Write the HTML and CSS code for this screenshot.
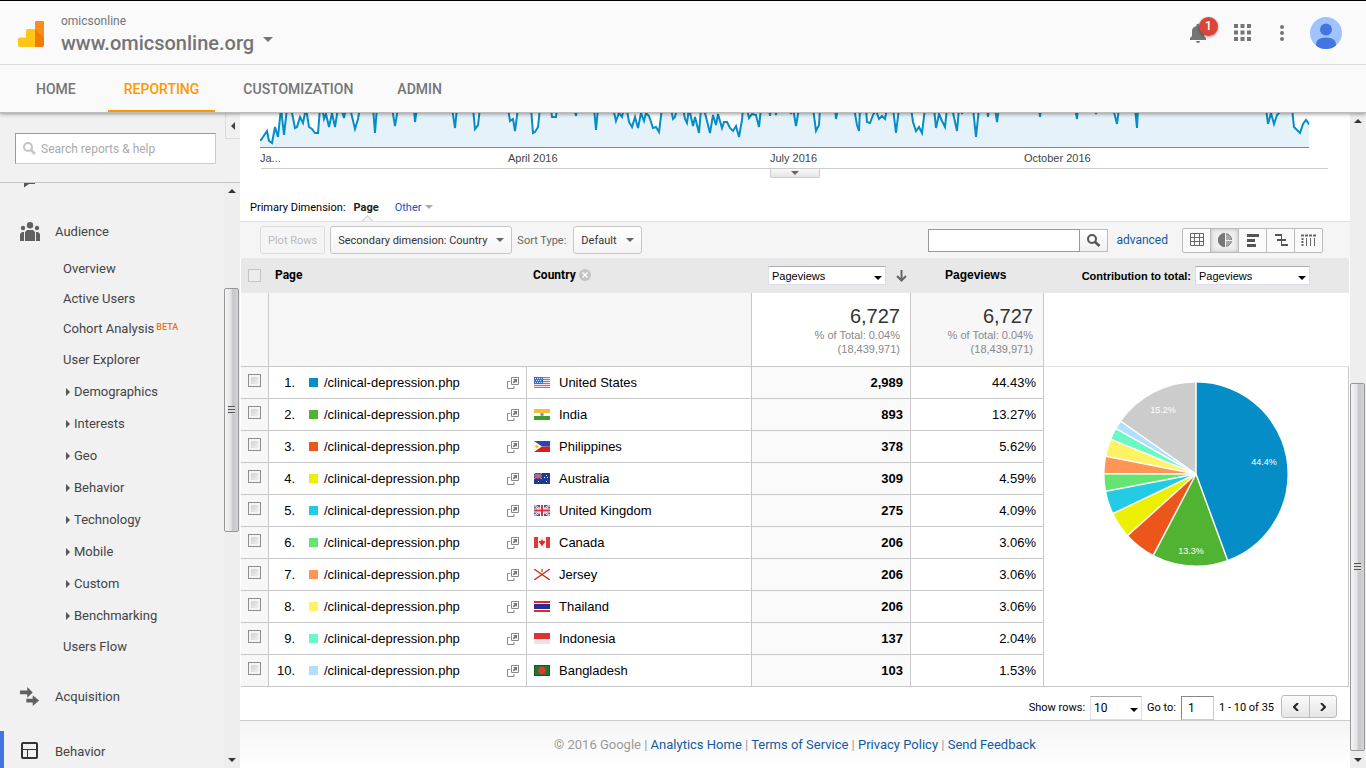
FILE: index.html
```html
<!DOCTYPE html>
<html lang="en">
<head>
    <meta charset="UTF-8">
    <meta name="viewport" content="width=device-width, initial-scale=1.0">
    <title>Pages - Analytics</title>
    <link rel="stylesheet" href="styles.css">
</head>
<body>
    <!-- shared icons -->
    <svg width="0" height="0" class="defs">
        <symbol id="open" viewBox="0 0 12 12">
            <path d="M4.500.5h7v7h-7zM3 4.500H.5v7h6.500V9" fill="none" stroke="#888"/>
            <path d="M6 2h4v4L8.800 4.800 6.800 6.500 5.700 5.300 7.400 3.400z" fill="#777"/>
        </symbol>
        <symbol id="us" viewBox="0 0 16 11">
            <path fill="#f6e3e3" d="M0 0h16v11H0z"/>
            <path stroke="#dc5f5f" d="M0 .5h16M0 2.500h16M0 4.500h16M0 6.500h16M0 8.500h16M0 10.500h16"/>
            <path fill="#3d6fc9" d="M0 0h9v7H0z"/>
            <path stroke="#dbe6fa" stroke-dasharray="1 1" d="M1 1.500h7M2 3.500h6M1 5.500h7"/>
        </symbol>
        <symbol id="in" viewBox="0 0 16 11">
            <path fill="#f4bd3c" d="M0 0h16v4H0z"/><path fill="#fff" d="M0 4h16v3H0z"/><path fill="#3d9a2c" d="M0 7h16v4H0z"/>
            <circle cx="8" cy="5.500" r="1.800" fill="#8797b8"/>
        </symbol>
        <symbol id="ph" viewBox="0 0 16 11">
            <path fill="#2746b9" d="M0 0h16v5.500H0z"/><path fill="#d91c1c" d="M0 5.500h16V11H0z"/>
            <path fill="#fbf6df" d="M0 0l8 5.500L0 11z"/><circle cx="2.800" cy="5.500" r="1.500" fill="#efc62d"/>
        </symbol>
        <symbol id="au" viewBox="0 0 16 11">
            <path fill="#1f3c8c" d="M0 0h16v11H0z"/><path stroke="#c9b3cd" d="M0 0l8 6M8 0L0 6"/>
            <path stroke="#e05b64" stroke-width="1.500" d="M4 0v6M0 3h8"/>
            <path stroke="#fff" stroke-dasharray="1 2" d="M4 8.500h3M10 4.500h5M12 2.500h1M12 8.500h2"/>
        </symbol>
        <symbol id="gb" viewBox="0 0 16 11">
            <path fill="#3c57a6" d="M0 0h16v11H0z"/><path stroke="#fff" stroke-width="2" d="M0 0l16 11M16 0L0 11"/>
            <path stroke="#d6414b" stroke-width=".8" d="M0 0l16 11M16 0L0 11"/>
            <path stroke="#fff" stroke-width="4" d="M8 0v11M0 5.500h16"/><path stroke="#d8303a" stroke-width="2" d="M8 0v11M0 5.500h16"/>
        </symbol>
        <symbol id="ca" viewBox="0 0 16 11">
            <path fill="#f5f0f0" d="M0 0h16v11H0z"/><path fill="#dd3a3a" d="M0 0h4v11H0zM12 0h4v11h-4z"/>
            <path fill="#d92b2b" d="M8 2l1 2 2 0-.5 2L9 7.500 8.300 9h-.6L7 7.500 5.500 6 5 4h2z"/>
        </symbol>
        <symbol id="je" viewBox="0 0 16 11">
            <path fill="#fff" d="M0 0h16v11H0z"/><path stroke="#d5281c" stroke-width="1.400" d="M0 0l16 11M16 0L0 11"/>
            <path fill="#d9a21b" d="M7 0h2v3H7z"/>
        </symbol>
        <symbol id="th" viewBox="0 0 16 11">
            <path fill="#e0252b" d="M0 0h16v11H0z"/><path fill="#fff" d="M0 2h16v7H0z"/><path fill="#2a2d93" d="M0 3h16v5H0z"/>
        </symbol>
        <symbol id="id" viewBox="0 0 16 11">
            <path fill="#dc3431" d="M0 0h16v6H0z"/><path fill="#e6e6e6" d="M0 6h16v5H0z"/>
        </symbol>
        <symbol id="bd" viewBox="0 0 16 11">
            <path fill="#155a1c" d="M0 0h16v11H0z"/><path fill="#24752a" d="M1 1h14v9H1z"/><circle cx="8" cy="5.500" r="3.700" fill="#e03a35"/>
        </symbol>
    </svg>

    <header>
        <div class="topbar">
            <svg class="logo" width="26" height="26" viewBox="0 0 26 26">
                <path fill="#ffc517" d="M0 18.500q0-2 2-2h6V10q0-2 2-2h7v18H2q-2 0-2-2z"/>
                <path fill="#f57c00" d="M17 2q0-2 2-2h5q2 0 2 2v22q0 2-2 2h-7z"/>
                <path fill="#fb8c1e" d="M17 2q0-2 2-2h5q2 0 2 2v15L17 8z"/>
            </svg>
            <div class="account">
                <span class="owner">omicsonline</span>
                <button class="property">www.omicsonline.org<i class="tri"></i></button>
            </div>
            <div class="tools">
                <button class="bell" aria-label="Notifications">
                    <svg width="18" height="20" viewBox="0 0 18 20" fill="#757575"><path d="M1 17v-2l2-2V8q0-4 4.500-5V1.500q1.500-1.500 3 0V3Q15 4 15 8v5l2 2v2zM7 18h4q0 2-2 2t-2-2z"/></svg>
                    <span class="badge">1</span>
                </button>
                <button class="apps" aria-label="Apps">
                    <svg width="17" height="17" viewBox="0 0 17 17" fill="#757575"><path d="M0 0h4v4H0zM6.500 0h4v4h-4zM13 0h4v4h-4zM0 6.500h4v4H0zM6.500 6.500h4v4h-4zM13 6.500h4v4h-4zM0 13h4v4H0zM6.500 13h4v4h-4zM13 13h4v4h-4z"/></svg>
                </button>
                <button class="more" aria-label="More">
                    <svg width="4" height="18" viewBox="0 0 4 18" fill="#757575"><circle cx="2" cy="3" r="2"/><circle cx="2" cy="9" r="2"/><circle cx="2" cy="15" r="2"/></svg>
                </button>
                <button class="avatar" aria-label="Account">
                    <svg width="32" height="32" viewBox="0 0 32 32"><circle cx="16" cy="16" r="16" fill="#a0c3ff"/><circle cx="16" cy="12.500" r="6" fill="#4374e0"/><path fill="#4374e0" d="M6 28.500Q5.500 20.500 16 20.500T26 28.500Q22 32 16 32T6 28.500z"/></svg>
                </button>
            </div>
        </div>
        <nav class="tabs">
            <a href="#">HOME</a>
            <a href="#" class="active">REPORTING</a>
            <a href="#">CUSTOMIZATION</a>
            <a href="#">ADMIN</a>
        </nav>
    </header>

    <div class="layout">
        <aside>
            <div class="search-area">
                <label class="search">
                    <svg width="13" height="13" viewBox="0 0 13 13" fill="none" stroke="#c4c4c4"><circle cx="5" cy="5" r="4" stroke-width="2"/><path d="M8 8l4 4" stroke-width="2.500"/></svg>
                    <input type="text" placeholder="Search reports &amp; help" aria-label="Search reports">
                </label>
                <button class="collapse" aria-label="Collapse"><svg width="4" height="8" viewBox="0 0 4 8"><path d="M4 0v8L0 4z" fill="#444"/></svg></button>
            </div>
            <div class="side-scroll">
                <nav class="menu">
                    <div class="clipped"><svg width="12" height="5" viewBox="0 0 12 5"><path d="M0 0h11v1H5L0 4.500z" fill="#555"/></svg></div>
                    <a href="#" class="section">
                        <svg width="20" height="19" viewBox="0 0 20 19" fill="#606060"><circle cx="10" cy="3.200" r="3.200"/><circle cx="3" cy="6" r="2.200"/><circle cx="17" cy="6" r="2.200"/><path d="M5 19v-9l2-2h6l2 2v9zM0 19v-7l2-2h2v9zM16 19v-9h2l2 2v7z"/></svg>
                        Audience
                    </a>
                    <ul>
                        <li><a href="#">Overview</a></li>
                        <li><a href="#">Active Users</a></li>
                        <li><a href="#">Cohort Analysis<span class="beta">BETA</span></a></li>
                        <li class="tall"><a href="#">User Explorer</a></li>
                        <li class="tall"><a href="#" class="group">Demographics</a></li>
                        <li class="tall"><a href="#" class="group">Interests</a></li>
                        <li class="tall"><a href="#" class="group">Geo</a></li>
                        <li class="tall"><a href="#" class="group">Behavior</a></li>
                        <li class="tall"><a href="#" class="group">Technology</a></li>
                        <li class="tall"><a href="#" class="group">Mobile</a></li>
                        <li class="tall"><a href="#" class="group">Custom</a></li>
                        <li class="tall"><a href="#" class="group">Benchmarking</a></li>
                        <li><a href="#">Users Flow</a></li>
                    </ul>
                    <a href="#" class="section">
                        <svg width="22" height="21" viewBox="0 0 22 21" fill="#606060"><path d="M0 4h8V0l6 6-6 6V8H0zM7 13h7V9l7 6-7 6v-4H7z"/></svg>
                        Acquisition
                    </a>
                    <a href="#" class="section current">
                        <svg width="20" height="18" viewBox="0 0 20 18" fill="none" stroke="#333"><rect x="2" y="1" width="15" height="15" rx="1" stroke-width="2"/><path d="M2 7.500h15M7.500 8v8"/></svg>
                        Behavior
                    </a>
                </nav>
                <div class="scrollbar">
                    <i class="up"></i><div class="gap-a"></div><div class="thumb"></div><div class="gap-b"></div><i class="down"></i>
                </div>
            </div>
        </aside>

        <main>
            <div class="chart">
                <svg width="100%" height="35" viewBox="0 0 1049 35" preserveAspectRatio="none">
                    <path class="area" d="M1 27L7 18 9 28 12 30 15 14 18 24 21-5 24 22 27-5 31-5 35 15 37 14 40 4 43 10 46-5 49 14 52 16 55 20 58 20 60-5 62-8 64 6 66 1 69 14 72 0 75 14 78-5 81-5 84 5 86-5 90-5 95 16 98 6 100-6 113-6 115 20 117-6 132-5 135 13 138-5 154-5 155 9 157-5 192-5 195 15 197-5 213-5 215 16 218 12 220-5 248-5 250 8 253 6 255 18 258-5 271-5 273 20 275 19 278 14 280-5 291-5 292 4 296 4 297-5 314-5 316 3 317-5 334-5 336 17 338-5 353-5 356 8 359 0 362 4 364-5 367-3 369 9 372 14 375 4 378 15 381 0 384 8 386 0 389 3 393 15 396 14 399 19 402-5 411-5 413 6 415 4 417-5 423-5 425 6 427 10 429-5 433 13 435 4 439 20 441-5 445 0 450 20 453 2 456 12 458 1 462 15 464 9 467 9 470 15 473 18 476 13 479 24 482 7 483-5 487-5 489 5 492 1 496 2 499 14 501-5 509-5 510 3 511-5 515-5 516 2 517-5 530-5 531 1 533-5 536 13 539-5 553-5 556 18 559 12 560-5 575-5 576 6 578-5 594-5 597 12 599 18 600-5 606-5 607 9 610 10 613 2 616-3 619 6 622 3 625 6 627-5 633-5 636 20 639-5 651-5 653 9 656 18 659 14 662 20 665-5 674-5 676 15 679 1 682 8 685 14 687-5 692-5 697 18 699-5 701-5 702 1 703-5 713-5 716 24 719-5 727-5 728 4 729-5 735-5 737 9 739-5 779-5 780 4 781-5 815-5 817 6 818-5 835-5 836 1 837-5 853-5 857 11 859-5 875-5 877 15 878-5 1006-5 1008 11 1011 0 1014 11 1017 2 1020-1 1032-5 1034 14 1040 20 1043 11 1046 7 1049 11H1060V60H-5V27z"/>
                    <path class="axis-line" d="M0 34.500h1049"/>
                </svg>
                <div class="months"><span>Ja...</span><span>April 2016</span><span>July 2016</span><span>October 2016</span></div>
            </div>
            <div class="divider"><button class="drawer" aria-label="Expand chart"><i class="tri"></i></button></div>

            <div class="dimension">
                <span>Primary Dimension:</span><b class="selected">Page</b><a href="#">Other<i class="tri"></i></a>
            </div>

            <div class="toolbar">
                <button class="btn" disabled>Plot Rows</button>
                <button class="btn">Secondary dimension: Country<i class="tri"></i></button>
                <span class="sort">Sort Type:</span>
                <button class="btn">Default<i class="tri"></i></button>
                <div class="find">
                    <input type="text" aria-label="Filter rows">
                    <button aria-label="Search"><svg width="14" height="13" viewBox="0 0 14 13" fill="none" stroke="#555"><circle cx="5" cy="5" r="4" stroke-width="2"/><path d="M8 8l4.500 4" stroke-width="2.600"/></svg></button>
                </div>
                <a href="#" class="advanced">advanced</a>
                <div class="views">
                    <button aria-label="Data"><svg width="14" height="14" viewBox="0 0 14 14" fill="none" stroke="#666"><path d="M.5.5h13v12H.5zM.5 4.500h13M.5 8.500h13M4.500.5v12M9.500.5v12"/></svg></button>
                    <button class="on" aria-label="Percentage"><svg width="14" height="14" viewBox="0 0 14 14"><circle cx="7" cy="7" r="6.500" fill="#aaa" stroke="#777"/><path fill="#777" d="M7 0v14A7 7 0 0 1 7 0z"/><path stroke="#f4f4f4" d="M7.500 0v14M8 7.500h6"/></svg></button>
                    <button aria-label="Performance"><svg width="14" height="14" viewBox="0 0 14 14" fill="#555"><path d="M1 1h12v3H1zM1 6h8v3H1zM1 11h9v3H1z"/></svg></button>
                    <button aria-label="Comparison"><svg width="14" height="14" viewBox="0 0 14 14" fill="none" stroke="#555"><path d="M7.500 1v12"/><path stroke-width="2" d="M1 2h7M7 7h5M3 7h4M7 12h7"/></svg></button>
                    <button aria-label="Pivot"><svg width="16" height="13" viewBox="0 0 16 13" fill="none" stroke="#666"><path stroke-width="2" stroke-dasharray="3 1" d="M0 1.500h16"/><path stroke-width="2" stroke-dasharray="2 1" d="M1.500 4v9"/><path d="M5.500 4v8M9.500 4v8M13.500 4v8"/></svg></button>
                </div>
            </div>

            <table>
                <colgroup><col class="c-check"><col class="c-page"><col class="c-country"><col class="c-views"><col class="c-share"><col></colgroup>
                <thead>
                    <tr>
                        <th><input type="checkbox" class="all" disabled aria-label="Select all rows"></th>
                        <th class="name">Page</th>
                        <th class="name">Country <svg width="12" height="12" viewBox="0 0 12 12"><circle cx="6" cy="6" r="6" fill="#c4c4c4"/><path stroke="#fff" stroke-width="1.300" d="M3.500 3.500l5 5M8.500 3.500l-5 5"/></svg></th>
                        <th class="metric">
                            <span class="select"><select aria-label="Metric"><option>Pageviews</option></select></span>
                            <svg width="11" height="12" viewBox="0 0 11 12" fill="none" stroke="#666" stroke-width="2"><path d="M5.500 0v10M1 6l4.500 4.500L10 6"/></svg>
                        </th>
                        <th class="share">Pageviews</th>
                        <th class="contribution"><div><label for="contrib">Contribution to total:</label><span class="select"><select id="contrib"><option>Pageviews</option></select></span></div></th>
                    </tr>
                </thead>
                <tbody>
                    <tr class="total">
                        <td></td>
                        <td colspan="2"></td>
                        <td><strong>6,727</strong>% of Total: 0.04%<br>(18,439,971)</td>
                        <td><strong>6,727</strong>% of Total: 0.04%<br>(18,439,971)</td>
                        <td></td>
                    </tr>
                    <tr>
                        <td><input type="checkbox" aria-label="Row 1"></td>
                        <td><div class="page"><span class="num">1.</span><i class="swatch s1"></i>/clinical-depression.php<svg class="open"><use href="#open"/></svg></div></td>
                        <td><div class="country"><svg><use href="#us"/></svg>United States</div></td>
                        <td>2,989</td><td>44.43%</td>
                        <td rowspan="10" class="pie">
                            <svg width="184" height="184" viewBox="-92 -92 184 184">
                                <g class="slices" transform="rotate(-90)">
                                    <circle r="46" pathLength="100" class="s1" stroke-dasharray="44.430 100"/>
                                    <circle r="46" pathLength="100" class="s2" stroke-dasharray="13.270 100" stroke-dashoffset="-44.430"/>
                                    <circle r="46" pathLength="100" class="s3" stroke-dasharray="5.620 100" stroke-dashoffset="-57.700"/>
                                    <circle r="46" pathLength="100" class="s4" stroke-dasharray="4.590 100" stroke-dashoffset="-63.320"/>
                                    <circle r="46" pathLength="100" class="s5" stroke-dasharray="4.090 100" stroke-dashoffset="-67.910"/>
                                    <circle r="46" pathLength="100" class="s6" stroke-dasharray="3.060 100" stroke-dashoffset="-72"/>
                                    <circle r="46" pathLength="100" class="s7" stroke-dasharray="3.060 100" stroke-dashoffset="-75.060"/>
                                    <circle r="46" pathLength="100" class="s8" stroke-dasharray="3.060 100" stroke-dashoffset="-78.120"/>
                                    <circle r="46" pathLength="100" class="s9" stroke-dasharray="2.040 100" stroke-dashoffset="-81.180"/>
                                    <circle r="46" pathLength="100" class="s10" stroke-dasharray="1.530 100" stroke-dashoffset="-83.220"/>
                                    <circle r="46" pathLength="100" class="s11" stroke-dasharray="15.250 100" stroke-dashoffset="-84.750"/>
                                </g>
                                <g class="cuts">
                                    <path d="M0 0V-93"/>
                                    <path d="M0 0V-93" transform="rotate(159.900)"/>
                                    <path d="M0 0V-93" transform="rotate(207.700)"/>
                                    <path d="M0 0V-93" transform="rotate(228)"/>
                                    <path d="M0 0V-93" transform="rotate(244.500)"/>
                                    <path d="M0 0V-93" transform="rotate(259.200)"/>
                                    <path d="M0 0V-93" transform="rotate(270.200)"/>
                                    <path d="M0 0V-93" transform="rotate(281.200)"/>
                                    <path d="M0 0V-93" transform="rotate(292.200)"/>
                                    <path d="M0 0V-93" transform="rotate(299.600)"/>
                                    <path d="M0 0V-93" transform="rotate(305.100)"/>
                                </g>
                                <text x="68" y="-9">44.4%</text>
                                <text x="-5" y="80">13.3%</text>
                                <text x="-33" y="-61">15.2%</text>
                            </svg>
                        </td>
                    </tr>
                    <tr>
                        <td><input type="checkbox" aria-label="Row 2"></td>
                        <td><div class="page"><span class="num">2.</span><i class="swatch s2"></i>/clinical-depression.php<svg class="open"><use href="#open"/></svg></div></td>
                        <td><div class="country"><svg><use href="#in"/></svg>India</div></td>
                        <td>893</td><td>13.27%</td>
                    </tr>
                    <tr>
                        <td><input type="checkbox" aria-label="Row 3"></td>
                        <td><div class="page"><span class="num">3.</span><i class="swatch s3"></i>/clinical-depression.php<svg class="open"><use href="#open"/></svg></div></td>
                        <td><div class="country"><svg><use href="#ph"/></svg>Philippines</div></td>
                        <td>378</td><td>5.62%</td>
                    </tr>
                    <tr>
                        <td><input type="checkbox" aria-label="Row 4"></td>
                        <td><div class="page"><span class="num">4.</span><i class="swatch s4"></i>/clinical-depression.php<svg class="open"><use href="#open"/></svg></div></td>
                        <td><div class="country"><svg><use href="#au"/></svg>Australia</div></td>
                        <td>309</td><td>4.59%</td>
                    </tr>
                    <tr>
                        <td><input type="checkbox" aria-label="Row 5"></td>
                        <td><div class="page"><span class="num">5.</span><i class="swatch s5"></i>/clinical-depression.php<svg class="open"><use href="#open"/></svg></div></td>
                        <td><div class="country"><svg><use href="#gb"/></svg>United Kingdom</div></td>
                        <td>275</td><td>4.09%</td>
                    </tr>
                    <tr>
                        <td><input type="checkbox" aria-label="Row 6"></td>
                        <td><div class="page"><span class="num">6.</span><i class="swatch s6"></i>/clinical-depression.php<svg class="open"><use href="#open"/></svg></div></td>
                        <td><div class="country"><svg><use href="#ca"/></svg>Canada</div></td>
                        <td>206</td><td>3.06%</td>
                    </tr>
                    <tr>
                        <td><input type="checkbox" aria-label="Row 7"></td>
                        <td><div class="page"><span class="num">7.</span><i class="swatch s7"></i>/clinical-depression.php<svg class="open"><use href="#open"/></svg></div></td>
                        <td><div class="country"><svg><use href="#je"/></svg>Jersey</div></td>
                        <td>206</td><td>3.06%</td>
                    </tr>
                    <tr>
                        <td><input type="checkbox" aria-label="Row 8"></td>
                        <td><div class="page"><span class="num">8.</span><i class="swatch s8"></i>/clinical-depression.php<svg class="open"><use href="#open"/></svg></div></td>
                        <td><div class="country"><svg><use href="#th"/></svg>Thailand</div></td>
                        <td>206</td><td>3.06%</td>
                    </tr>
                    <tr>
                        <td><input type="checkbox" aria-label="Row 9"></td>
                        <td><div class="page"><span class="num">9.</span><i class="swatch s9"></i>/clinical-depression.php<svg class="open"><use href="#open"/></svg></div></td>
                        <td><div class="country"><svg><use href="#id"/></svg>Indonesia</div></td>
                        <td>137</td><td>2.04%</td>
                    </tr>
                    <tr>
                        <td><input type="checkbox" aria-label="Row 10"></td>
                        <td><div class="page"><span class="num">10.</span><i class="swatch s10"></i>/clinical-depression.php<svg class="open"><use href="#open"/></svg></div></td>
                        <td><div class="country"><svg><use href="#bd"/></svg>Bangladesh</div></td>
                        <td>103</td><td>1.53%</td>
                    </tr>
                </tbody>
            </table>

            <div class="pager">
                <label for="rows">Show rows:</label>
                <span class="select rows"><select id="rows"><option>10</option></select></span>
                <label for="goto">Go to:</label>
                <input type="text" id="goto" value="1">
                <span class="range">1 - 10 of 35</span>
                <div class="steps">
                    <button aria-label="Previous"><svg width="6" height="8" viewBox="0 0 6 8" fill="none" stroke="#222" stroke-width="2"><path d="M5 0L1 4l4 4"/></svg></button>
                    <button aria-label="Next"><svg width="6" height="8" viewBox="0 0 6 8" fill="none" stroke="#222" stroke-width="2"><path d="M1 0l4 4-4 4"/></svg></button>
                </div>
            </div>

            <footer>&copy; 2016 Google | <a href="#">Analytics Home</a> | <a href="#">Terms of Service</a> | <a href="#">Privacy Policy</a> | <a href="#">Send Feedback</a></footer>
        </main>

        <div class="scrollbar main-bar">
            <i class="up"></i><div class="gap-a"></div><div class="thumb"></div><div class="gap-b"></div><i class="down"></i>
        </div>
    </div>
</body>
</html>
```
FILE: styles.css
```css
* {
    box-sizing: border-box;
}
body {
    margin: 0;
    height: 100vh;
    overflow: hidden;
    display: flex;
    flex-direction: column;
    font-family: Roboto, sans-serif;
    font-size: 13px;
    color: #444;
    background: #fff;
}
a {
    color: inherit;
    text-decoration: none;
}
button {
    font-family: inherit;
    padding: 0;
    border: 0;
    background: none;
    color: inherit;
}
svg {
    display: block;
    flex: none;
}
.defs {
    position: absolute;
}
.tri {
    display: inline-block;
    border: 4px solid transparent;
    border-top-color: #666;
    border-bottom: 0;
}

/* header */
header {
    position: relative;
    z-index: 1;
    flex: none;
    background: #fafafa;
    border-top: 1px solid #000;
    border-bottom: 1px solid #bbb;
    box-shadow: 0 1px 4px rgba(0, 0, 0, 0.4);
}
.topbar {
    display: flex;
    align-items: center;
    height: 64px;
    padding: 0 24px 0 18px;
    border-bottom: 1px solid #ddd;
}
.account {
    display: flex;
    flex-direction: column;
    align-items: flex-start;
    margin-left: 17px;
    padding-top: 4px;
}
.logo {
    margin-top: 2px;
}
.owner {
    font-size: 12px;
    line-height: 16px;
    color: #757575;
}
.property {
    display: flex;
    align-items: center;
    font-size: 20px;
    font-weight: 500;
    line-height: 28px;
    color: #757575;
}
.property .tri {
    border-width: 5px 5px 0;
    margin: 0 0 6px 9px;
    border-top-color: #757575;
}
.tools {
    display: flex;
    align-items: center;
    margin-left: auto;
}
.bell {
    position: relative;
    margin-right: 27px;
}
.badge {
    position: absolute;
    left: 10px;
    top: -6px;
    width: 19px;
    height: 19px;
    border-radius: 50%;
    background: #db4437;
    box-shadow: 0 1px 3px rgba(0, 0, 0, 0.4);
    color: #fff;
    font-size: 12px;
    font-weight: 500;
    line-height: 19px;
    text-align: center;
}
.apps {
    margin-right: 29px;
}
.more {
    margin-right: 26px;
}
.tabs {
    display: flex;
    gap: 12px;
    height: 47px;
    padding-left: 20px;
}
.tabs a {
    padding: 0 16px;
    border-bottom: 2px solid transparent;
    font-size: 14px;
    font-weight: 500;
    line-height: 48px;
    color: #757575;
}
.tabs .active {
    margin-left: 4px;
    color: #ff9800;
    border-color: #ff9800;
}

.layout {
    flex: 1;
    min-height: 0;
    display: flex;
}

/* sidebar */
aside {
    flex: none;
    width: 240px;
    display: flex;
    flex-direction: column;
    background: #f1f1f1;
}
.search-area {
    display: flex;
    justify-content: space-between;
    height: 70px;
    padding-left: 15px;
    border-bottom: 1px solid #c6c6c6;
}
.search {
    display: flex;
    align-items: center;
    gap: 5px;
    width: 201px;
    height: 31px;
    margin-top: 20px;
    padding-left: 7px;
    border: 1px solid #ccc;
    border-top-color: #999;
    border-left-color: #999;
    background: #fff;
}
.search input {
    flex: 1;
    min-width: 0;
    padding: 0;
    border: 0;
    outline: 0;
    font: 12px Roboto, sans-serif;
}
.search input::placeholder {
    color: #aaa;
}
.collapse {
    display: flex;
    align-items: center;
    justify-content: center;
    width: 15px;
    height: 26px;
    border: 1px solid #ddd;
    border-width: 0 0 1px 1px;
}
.side-scroll {
    flex: 1;
    min-height: 0;
    display: flex;
}
.menu {
    flex: 1;
    overflow: hidden;
}
.clipped {
    height: 28px;
    padding-left: 24px;
}
.section {
    display: flex;
    align-items: center;
    gap: 15px;
    height: 40px;
    padding-left: 20px;
}
.section svg {
    width: 20px;
    overflow: visible;
}
.section.current {
    margin-top: 15px;
    padding-left: 16px;
    border-left: 4px solid #4374e0;
}
.menu ul {
    list-style: none;
    margin: 2px 0 15px;
    padding: 0 0 0 63px;
}
.menu li {
    display: flex;
    align-items: center;
    height: 30px;
}
.menu li.tall {
    height: 32px;
}
.beta {
    margin-left: 2px;
    font-size: 9px;
    font-weight: 500;
    color: #e8711c;
    vertical-align: 3px;
}
.group::before {
    content: "";
    display: inline-block;
    margin: 0 4px 0 3px;
    border: 4px solid transparent;
    border-left-color: #555;
    border-right: 0;
}

/* scrollbars */
.scrollbar {
    flex: none;
    width: 16px;
    display: flex;
    flex-direction: column;
    align-items: center;
    padding: 6px 1px 6px 0;
    background: #eee;
}
.up,
.down {
    border: 4px solid transparent;
    border-bottom-color: #333;
    border-top: 0;
}
.down {
    border-bottom: 0;
    border-top: 4px solid #333;
}
.thumb {
    align-self: stretch;
    display: flex;
    align-items: center;
    justify-content: center;
    flex: 243;
    border: 1px solid #979797;
    border-radius: 2px;
    background: linear-gradient(to right, #f5f5f5, #e4e4e6 45%, #c6c6ca 60%, #d4d4d8);
}
.thumb::before {
    content: "";
    width: 7px;
    height: 8px;
    background: repeating-linear-gradient(#555 0 1px, #ddd 1px 3px);
}
.gap-a {
    flex: 95;
}
.gap-b {
    flex: 227;
}
.main-bar .gap-a {
    flex: 260;
}
.main-bar .thumb {
    flex: 366;
}
.main-bar .gap-b {
    flex: 7;
}

/* report */
main {
    flex: 1;
    min-width: 0;
    display: flex;
    flex-direction: column;
}
.chart {
    margin: 0 41px 0 20px;
    font-size: 11px;
}
.area {
    fill: #e5f2f9;
    stroke: #058dc7;
    stroke-width: 2;
    vector-effect: non-scaling-stroke;
}
.axis-line {
    stroke: #7d8b8f;
    vector-effect: non-scaling-stroke;
}
.months {
    display: grid;
    grid-template-columns: 248fr 262fr 254fr 285fr;
    font-family: "Liberation Sans", sans-serif;
    line-height: 20px;
}
.divider {
    height: 28px;
    margin: 0 22px 0 21px;
    border-top: 1px solid #ccc;
}
.drawer {
    display: flex;
    align-items: center;
    justify-content: center;
    width: 50px;
    height: 9px;
    margin: 0 auto;
    border: 1px solid #ccc;
    border-top: 0;
    border-radius: 0 0 2px 2px;
    background: linear-gradient(#f8f8f8, #e5e5e5);
}
.dimension {
    display: flex;
    align-items: center;
    height: 25px;
    padding: 0 0 3px 10px;
    font-size: 11px;
    color: #000;
}
.selected {
    position: relative;
    margin: 0 16px 0 8px;
    color: #222;
}
/* notch pointing at the chosen dimension */
.selected::after {
    content: "";
    position: absolute;
    left: 9px;
    top: 16px;
    width: 8px;
    height: 8px;
    border: 1px solid #ccc;
    border-width: 1px 0 0 1px;
    background: #f5f5f5;
    transform: rotate(45deg);
}
.dimension a {
    color: #1c4fc4;
}
.dimension .tri {
    margin: 0 0 2px 3px;
    border-top-color: #aaa;
}
.toolbar {
    position: relative;
    display: flex;
    align-items: center;
    height: 37px;
    padding: 0 27px 0 20px;
    border-top: 1px solid #e2e2e2;
    background: #f5f5f5;
    font-size: 11px;
}
.btn {
    height: 28px;
    margin-right: 5px;
    padding: 0 7px;
    border: 1px solid #c6c6c6;
    border-radius: 3px;
    background: linear-gradient(#fff, #f4f4f4);
    font-size: 11px;
    color: #333;
    white-space: nowrap;
}
.btn:disabled {
    border-color: #ddd;
    background: #f5f5f5;
    color: #bbb;
}
.btn .tri {
    margin: 0 0 2px 9px;
}
.sort {
    margin-right: 7px;
    color: #666;
}
.find {
    display: flex;
    margin-left: auto;
}
.find input {
    width: 152px;
    height: 23px;
    border: 1px solid #999;
}
.find button {
    display: flex;
    align-items: center;
    justify-content: center;
    width: 28px;
    border: 1px solid #bbb;
    border-left: 0;
    background: linear-gradient(#fff, #f0f0f0);
}
.advanced {
    margin: 0 14px 0 8px;
    font-size: 12px;
    color: #15599d;
}
.views {
    display: flex;
    border: 1px solid #bbb;
    border-radius: 2px;
    background: #fafafa;
}
.views button {
    display: flex;
    align-items: center;
    justify-content: center;
    width: 28px;
    height: 23px;
    border-right: 1px solid #bbb;
}
.views button:last-child {
    width: 27px;
    border-right: 0;
}
.views .on {
    background: #eee;
    box-shadow: inset 0 0 4px #bbb;
}

/* data table */
table {
    width: calc(100% - 2px);
    margin: 0 1px;
    table-layout: fixed;
    border-spacing: 0;
    font-family: "Liberation Sans", sans-serif;
    font-size: 13px;
    color: #000;
}
.c-check {
    width: 28px;
}
.c-page {
    width: 258px;
}
.c-country {
    width: 225px;
}
.c-views {
    width: 159px;
}
.c-share {
    width: 133px;
}
th {
    height: 35px;
    padding: 0 6px;
    background: #e8e8e8;
    font: bold 12px Roboto, sans-serif;
    text-align: left;
    white-space: nowrap;
}
th.name,
th.share {
    padding-bottom: 2px;
}
th svg {
    display: inline-block;
    vertical-align: middle;
}
th.metric {
    padding: 0 3px 0 16px;
}
th .select {
    width: 118px;
    height: 19px;
    vertical-align: middle;
}
th.metric svg {
    margin-left: 7px;
}
th.share {
    padding-left: 34px;
    font: bold 12px "Liberation Sans", sans-serif;
}
th.contribution {
    padding: 0 39px 0 0;
    font: bold 11px "Liberation Sans", sans-serif;
}
th.contribution div {
    display: flex;
    align-items: center;
    justify-content: flex-end;
    gap: 4px;
}
th.contribution .select {
    width: 115px;
}
td {
    height: 32px;
    padding: 0 7px;
    border-right: 1px solid #c8c8c8;
    border-bottom: 1px solid #c8c8c8;
    text-align: right;
}
td:nth-child(4) {
    background: #fafafa;
    font-weight: bold;
}
td:first-child {
    background: #f7f7f7;
}
input[type="checkbox"] {
    appearance: none;
    display: block;
    width: 13px;
    height: 13px;
    margin: 0 0 4px;
    border: 1px solid #8e8f8f;
    background: linear-gradient(135deg, #c8ccd2, #f4f4f4);
    box-shadow: inset 0 0 0 2px #f4f4f4;
}
input.all {
    margin: 0 0 0 1px;
    border-color: #c4c4c4;
    background: #ececec;
    box-shadow: none;
}
.total td {
    height: 74px;
    padding: 0 10px;
    background: #f7f7f7;
    font-size: 11px;
    font-weight: normal;
    line-height: 14px;
    color: #888;
}
.total td:nth-child(3),
.total td:last-child {
    background: #fff;
}
.total td:last-child {
    border-right-color: transparent;
    border-bottom-color: #e2e2e2;
}
.total strong {
    display: block;
    font-size: 20px;
    font-weight: normal;
    line-height: 24px;
    color: #333;
}
.page,
.country {
    display: flex;
    align-items: center;
}
.page .num {
    width: 19px;
    margin-right: 14px;
    display: flex;
    justify-content: flex-end;
}
.swatch {
    width: 9px;
    height: 9px;
    margin-right: 6px;
    background: currentColor;
}
.open {
    width: 12px;
    height: 12px;
    margin-left: auto;
}
.country svg {
    width: 16px;
    height: 11px;
    margin-right: 9px;
}
td.pie {
    padding: 15px 0 0 60px;
    vertical-align: top;
}
.slices circle {
    fill: none;
    stroke: currentColor;
    stroke-width: 91;
}
.cuts path {
    stroke: #fff;
    stroke-width: 1.5;
}
.pie text {
    fill: #fff;
    font-size: 9px;
    text-anchor: middle;
}
.s1 { color: #058dc7; }
.s2 { color: #50b432; }
.s3 { color: #ed561b; }
.s4 { color: #edef00; }
.s5 { color: #24cbe5; }
.s6 { color: #64e572; }
.s7 { color: #ff9655; }
.s8 { color: #fff263; }
.s9 { color: #6af9c4; }
.s10 { color: #b2deff; }
.s11 { color: #ccc; }

.select {
    position: relative;
    display: inline-block;
}
.select select {
    appearance: none;
    width: 100%;
    height: 100%;
    padding: 0 3px;
    border: 1px solid #dde;
    border-top-color: #abadb3;
    border-radius: 0;
    background: #fff;
    font: 11px "Liberation Sans", sans-serif;
    color: #000;
}
.select::after {
    content: "";
    position: absolute;
    right: 4px;
    top: 50%;
    border: 4px solid transparent;
    border-top-color: #000;
    border-bottom: 0;
}

/* pager and footer */
.pager {
    display: flex;
    align-items: center;
    justify-content: flex-end;
    gap: 5px;
    height: 33px;
    padding: 8px 13px 0 0;
    font-size: 11px;
    color: #000;
}
.rows {
    width: 52px;
    height: 24px;
}
.rows select,
#goto {
    font: 12px Roboto, sans-serif;
}
#goto {
    width: 33px;
    height: 24px;
    padding: 0 6px;
    border: 1px solid #ccc;
    border-top-color: #888;
    border-left-color: #888;
}
.steps {
    display: flex;
    height: 23px;
    margin: 0 0 2px 2px;
    border: 1px solid #bbb;
    border-radius: 3px;
    background: linear-gradient(#fafafa, #e6e6e6);
}
.steps button {
    display: flex;
    align-items: center;
    justify-content: center;
    width: 27px;
}
.steps button + button {
    border-left: 1px solid #bbb;
}
footer {
    flex: 1;
    padding-top: 16px;
    border-top: 1px solid #ccc;
    background: linear-gradient(#f5f5f5, #fff);
    text-align: center;
    color: #999;
}
footer a {
    color: #15599d;
}
```
